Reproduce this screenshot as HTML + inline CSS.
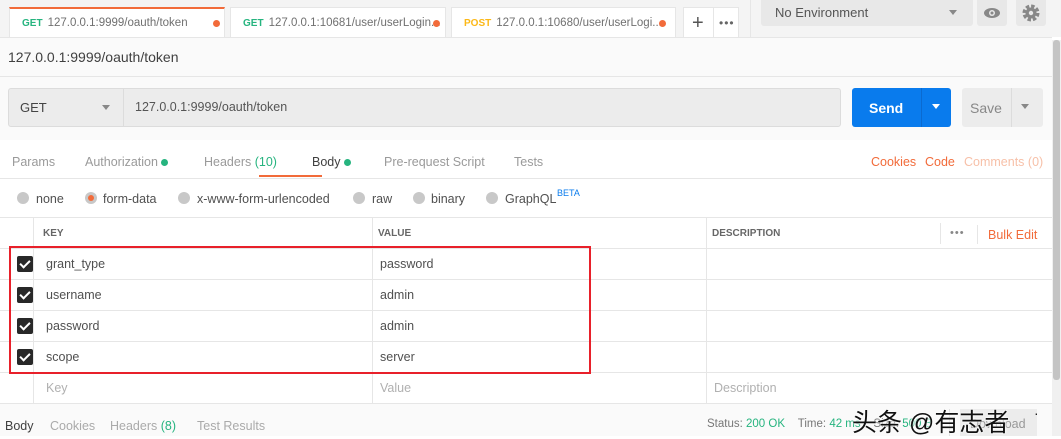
<!DOCTYPE html>
<html><head><meta charset="utf-8"><style>
*{box-sizing:border-box;margin:0;padding:0}
body{width:1061px;height:436px;overflow:hidden;background:#fff;font-family:"Liberation Sans","Noto Sans CJK SC",sans-serif;font-size:12px;color:#505050;position:relative}
.a{position:absolute;white-space:nowrap}
.tab{position:absolute;top:7px;height:31px;background:#fff;border:1px solid #e6e6e6;border-bottom:none;font-size:11.5px;line-height:31px;padding-left:12px;color:#707070}
.dot{display:inline-block;width:7px;height:7px;border-radius:50%;background:#f26b3a;position:absolute;top:12px}
.g{color:#26b47f;font-weight:bold;font-size:10px;margin-right:5px}
.radio{position:absolute;top:192px;width:12px;height:12px;border-radius:50%;background:#c8c8c8}
.hl{position:absolute;left:0;width:1052px;height:1px;background:#e6e6e6}
.vl{position:absolute;width:1px;background:#e6e6e6}
.cb{position:absolute;left:17px;width:16px;height:16px;background:#282828;border-radius:2px}
.cb:after{content:"";position:absolute;left:5px;top:2px;width:4px;height:8px;border:solid #fff;border-width:0 2px 2px 0;transform:rotate(45deg)}
.t{font-size:12.5px;color:#505050}
</style></head><body>
<div class="a" style="left:0;top:0;width:1061px;height:37px;background:#f4f4f4"></div>
<div class="tab" style="left:9px;width:216px;border-top:2px solid #f26b3a;line-height:29px"><span class="g">GET</span>127.0.0.1:9999/oauth/token<span class="dot" style="left:203px;top:11px"></span></div>
<div class="tab" style="left:230px;width:216px"><span class="g">GET</span>127.0.0.1:10681/user/userLogin...<span class="dot" style="left:202px"></span></div>
<div class="tab" style="left:451px;width:225px"><span class="g" style="color:#fcb817">POST</span>127.0.0.1:10680/user/userLogi...<span class="dot" style="left:207px"></span></div>
<div class="tab" style="left:683px;width:56px;padding:0"><span class="a" style="left:8px;top:0;font-size:20px;color:#555">+</span><span class="a" style="left:29px;top:0;width:1px;height:30px;background:#e6e6e6"></span><span class="a" style="left:35px;top:0;font-size:12px;color:#666;letter-spacing:1px">•••</span></div>
<div class="a" style="left:750px;top:0;width:1px;height:37px;background:#e6e6e6"></div>
<div class="a" style="left:761px;top:0;width:212px;height:26px;background:#e8e8e8;border-radius:0 0 3px 3px;padding:5px 0 0 14px;font-size:13px;color:#555">No Environment<span class="a" style="left:188px;top:10px;border:4px solid transparent;border-top:5px solid #888"></span></div>
<div class="a" style="left:977px;top:0;width:30px;height:26px;background:#e8e8e8;border-radius:0 0 3px 3px"><svg width="30" height="26"><ellipse cx="15" cy="13" rx="8" ry="5" fill="#888"/><circle cx="15" cy="13" r="3" fill="#e8e8e8"/><circle cx="15" cy="13" r="1.5" fill="#888"/></svg></div>
<div class="a" style="left:1016px;top:0;width:30px;height:26px;background:#e8e8e8;border-radius:0 0 3px 3px"><svg width="30" height="26"><circle cx="15" cy="13" r="6" fill="none" stroke="#888" stroke-width="5" stroke-dasharray="3 1.7"/><circle cx="15" cy="13" r="5.5" fill="#888"/><circle cx="15" cy="13" r="2.2" fill="#e8e8e8"/></svg></div>
<div class="a" style="left:0;top:37px;width:1052px;height:40px;background:#fafafa;border-top:1px solid #e6e6e6;border-bottom:1px solid #e6e6e6"></div>
<div class="a" style="left:8px;top:49px;font-size:14px;color:#404040">127.0.0.1:9999/oauth/token</div>
<div class="a" style="left:1052px;top:40px;width:9px;height:396px;background:#f0f0f0"><div style="margin-left:1px;width:7px;height:340px;background:#c4c4c4;border-radius:3px"></div></div>
<div class="a" style="left:0;top:77px;width:1052px;height:63px;background:#fafafa"></div>
<div class="a" style="left:8px;top:88px;width:833px;height:39px;background:#ececec;border:1px solid #dcdcdc;border-radius:3px"></div>
<div class="a" style="left:123px;top:88px;width:1px;height:39px;background:#dcdcdc"></div>
<div class="a" style="left:20px;top:100px;font-size:13px;color:#444">GET</div>
<div class="a" style="left:102px;top:105px;border:4px solid transparent;border-top:5px solid #888"></div>
<div class="a" style="left:135px;top:100px;font-size:12.5px;color:#555">127.0.0.1:9999/oauth/token</div>
<div class="a" style="left:852px;top:88px;width:99px;height:39px;background:#097bed;border-radius:3px"></div>
<div class="a" style="left:921px;top:88px;width:1px;height:39px;background:#0a6ad0"></div>
<div class="a" style="left:869px;top:100px;font-size:14px;color:#fff;font-weight:bold">Send</div>
<div class="a" style="left:932px;top:104px;border:4px solid transparent;border-top:5px solid #fff"></div>
<div class="a" style="left:962px;top:88px;width:81px;height:39px;background:#ececec;border-radius:3px"></div>
<div class="a" style="left:1011px;top:88px;width:1px;height:39px;background:#dcdcdc"></div>
<div class="a" style="left:970px;top:100px;font-size:14px;color:#888">Save</div>
<div class="a" style="left:1021px;top:104px;border:4px solid transparent;border-top:5px solid #888"></div>
<div class="a t" style="left:12px;top:155px;color:#9a9a9a">Params</div>
<div class="a t" style="left:85px;top:155px;color:#9a9a9a">Authorization <span style="display:inline-block;width:7px;height:7px;border-radius:50%;background:#26b47f"></span></div>
<div class="a t" style="left:204px;top:155px;color:#9a9a9a">Headers <span style="color:#26b47f">(10)</span></div>
<div class="a t" style="left:312px;top:155px;color:#404040">Body <span style="display:inline-block;width:7px;height:7px;border-radius:50%;background:#26b47f"></span></div>
<div class="a" style="left:259px;top:175px;width:63px;height:2px;background:#f26b3a"></div>
<div class="a t" style="left:384px;top:155px;color:#9a9a9a">Pre-request Script</div>
<div class="a t" style="left:514px;top:155px;color:#9a9a9a">Tests</div>
<div class="a t" style="left:871px;top:155px;color:#f26b3a">Cookies</div>
<div class="a t" style="left:925px;top:155px;color:#f26b3a">Code</div>
<div class="a t" style="left:964px;top:155px;color:#f7c0a8">Comments (0)</div>
<div class="hl" style="top:178px"></div>
<div class="radio" style="left:17px"></div><div class="a t" style="left:36px;top:192px">none</div>
<div class="radio" style="left:85px"><div style="margin:3px;width:6px;height:6px;border-radius:50%;background:#f26b3a"></div></div><div class="a t" style="left:103px;top:192px">form-data</div>
<div class="radio" style="left:178px"></div><div class="a t" style="left:197px;top:192px">x-www-form-urlencoded</div>
<div class="radio" style="left:353px"></div><div class="a t" style="left:372px;top:192px">raw</div>
<div class="radio" style="left:413px"></div><div class="a t" style="left:431px;top:192px">binary</div>
<div class="radio" style="left:486px"></div><div class="a t" style="left:505px;top:192px">GraphQL</div>
<div class="a" style="left:557px;top:188px;font-size:9px;color:#097bed">BETA</div>
<div class="hl" style="top:217px"></div>
<div class="hl" style="top:248px"></div>
<div class="hl" style="top:279px"></div>
<div class="hl" style="top:310px"></div>
<div class="hl" style="top:341px"></div>
<div class="hl" style="top:372px"></div>
<div class="hl" style="top:403px"></div>
<div class="vl" style="left:33px;top:217px;height:186px"></div>
<div class="vl" style="left:372px;top:217px;height:186px"></div>
<div class="vl" style="left:706px;top:217px;height:186px"></div>
<div class="vl" style="left:940px;top:223px;height:21px"></div>
<div class="vl" style="left:977px;top:225px;height:19px"></div>
<div class="a" style="left:43px;top:228px;font-size:10px;font-weight:bold;color:#666">KEY</div>
<div class="a" style="left:378px;top:228px;font-size:10px;font-weight:bold;color:#666">VALUE</div>
<div class="a" style="left:712px;top:228px;font-size:10px;font-weight:bold;color:#666">DESCRIPTION</div>
<div class="a" style="left:950px;top:227px;font-size:11px;color:#888;letter-spacing:1px">•••</div>
<div class="a t" style="left:988px;top:228px;color:#f26b3a">Bulk Edit</div>
<div class="cb" style="top:256px"></div><div class="a t" style="left:46px;top:257px">grant_type</div><div class="a t" style="left:380px;top:257px">password</div>
<div class="cb" style="top:287px"></div><div class="a t" style="left:46px;top:288px">username</div><div class="a t" style="left:380px;top:288px">admin</div>
<div class="cb" style="top:318px"></div><div class="a t" style="left:46px;top:319px">password</div><div class="a t" style="left:380px;top:319px">admin</div>
<div class="cb" style="top:349px"></div><div class="a t" style="left:46px;top:350px">scope</div><div class="a t" style="left:380px;top:350px">server</div>
<div class="a t" style="left:46px;top:381px;color:#b0b0b0">Key</div><div class="a t" style="left:380px;top:381px;color:#b0b0b0">Value</div><div class="a t" style="left:714px;top:381px;color:#b0b0b0">Description</div>
<div class="a" style="left:9px;top:246px;width:582px;height:128px;border:2px solid #e8202a"></div>
<div class="a" style="left:0;top:404px;width:1052px;height:32px;background:#fafafa"></div>
<div class="a t" style="left:5px;top:419px;color:#404040">Body</div>
<div class="a t" style="left:50px;top:419px;color:#aaa">Cookies</div>
<div class="a t" style="left:110px;top:419px;color:#aaa">Headers <span style="color:#26b47f">(8)</span></div>
<div class="a t" style="left:197px;top:419px;color:#aaa">Test Results</div>
<div class="a" style="left:707px;top:418px;font-size:11.5px;color:#777">Status: <span style="color:#26b47f">200 OK</span>&nbsp;&nbsp;&nbsp;&nbsp;Time: <span style="color:#26b47f">42 ms</span>&nbsp;&nbsp;&nbsp;&nbsp;Size: <span style="color:#26b47f">500 B</span></div>
<div class="a" style="left:949px;top:409px;width:1px;height:27px;background:#e0e0e0"></div>
<div class="a" style="left:960px;top:409px;width:77px;height:27px;background:#ececec;font-size:12.5px;color:#999;padding:8px 0 0 10px">Download</div>
<div class="a" style="left:852px;top:403px;font-size:25px;color:#111;text-shadow:0 0 2px #fff,0 0 2px #fff">头条 @有志者</div>
<div class="a" style="left:1034px;top:405px;font-size:14px;color:#222">·</div>
</body></html>
